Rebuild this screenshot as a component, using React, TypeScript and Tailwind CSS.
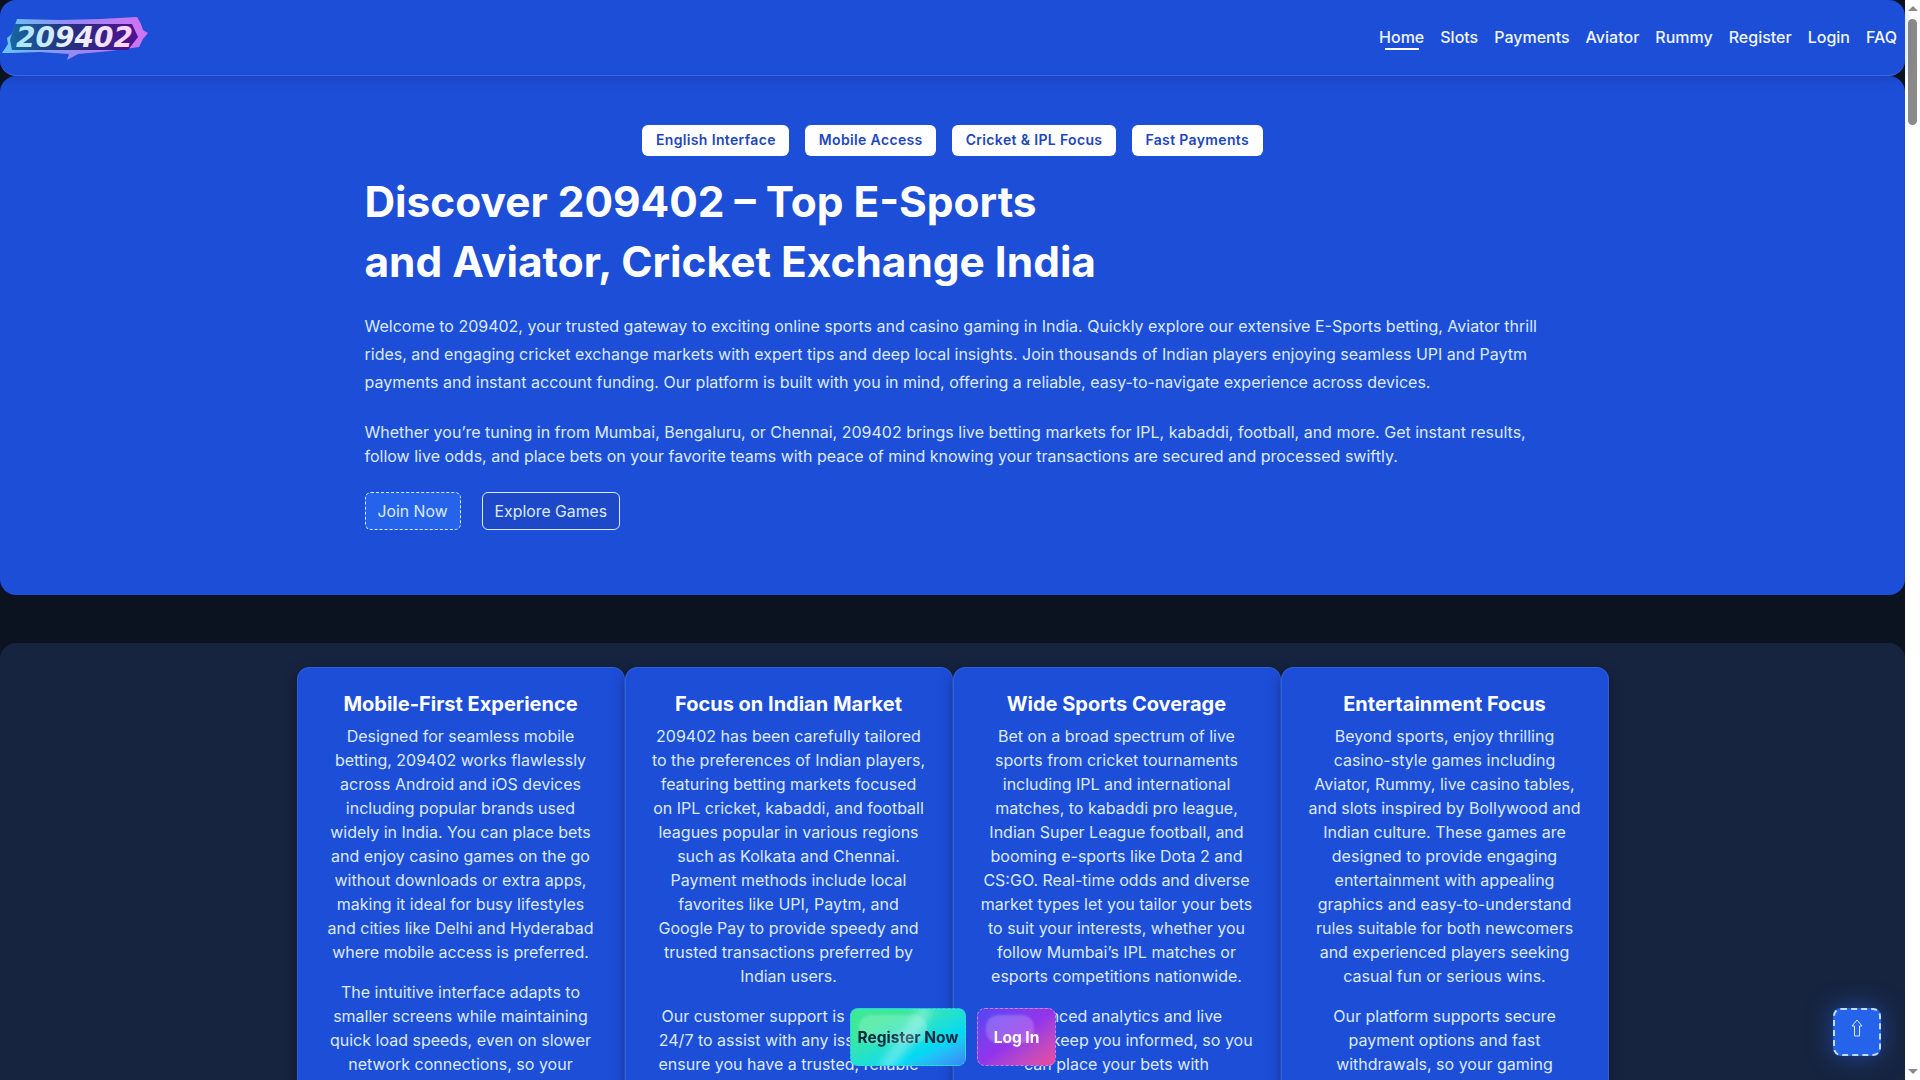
import React from 'react';

const navLinks = ['Home', 'Slots', 'Payments', 'Aviator', 'Rummy', 'Register', 'Login', 'FAQ'];
const tags = ['English Interface', 'Mobile Access', 'Cricket & IPL Focus', 'Fast Payments'];

const cards = [
    {
        title: 'Mobile-First Experience',
        body: [
            'Designed for seamless mobile betting, 209402 works flawlessly across Android and iOS devices including popular brands used widely in India. You can place bets and enjoy casino games on the go without downloads or extra apps, making it ideal for busy lifestyles and cities like Delhi and Hyderabad where mobile access is preferred.',
            'The intuitive interface adapts to smaller screens while maintaining quick load speeds, even on slower network connections, so your games keep running smoothly wherever you are.',
        ],
    },
    {
        title: 'Focus on Indian Market',
        body: [
            '209402 has been carefully tailored to the preferences of Indian players, featuring betting markets focused on IPL cricket, kabaddi, and football leagues popular in various regions such as Kolkata and Chennai. Payment methods include local favorites like UPI, Paytm, and Google Pay to provide speedy and trusted transactions preferred by Indian users.',
            'Our customer support is available 24/7 to assist with any issues, and ensure you have a trusted, reliable experience every time you play with us.',
        ],
    },
    {
        title: 'Wide Sports Coverage',
        body: [
            'Bet on a broad spectrum of live sports from cricket tournaments including IPL and international matches, to kabaddi pro league, Indian Super League football, and booming e-sports like Dota 2 and CS:GO. Real-time odds and diverse market types let you tailor your bets to suit your interests, whether you follow Mumbai’s IPL matches or esports competitions nationwide.',
            'Advanced analytics and live statistics keep you informed, so you can place your bets with comprehensive insight at every stage of the match.',
        ],
    },
    {
        title: 'Entertainment Focus',
        body: [
            'Beyond sports, enjoy thrilling casino-style games including Aviator, Rummy, live casino tables, and slots inspired by Bollywood and Indian culture. These games are designed to provide engaging entertainment with appealing graphics and easy-to-understand rules suitable for both newcomers and experienced players seeking casual fun or serious wins.',
            'Our platform supports secure payment options and fast withdrawals, so your gaming sessions stay simple and stress free from start to finish.',
        ],
    },
];

const Logo = () => (
    <svg width="150" height="48" viewBox="0 0 150 48" className="block">
        <defs>
            <linearGradient id="logoEdge" x1="0" x2="1" y1="0" y2="0">
                <stop offset="0" stopColor="#62c8f6" />
                <stop offset="0.5" stopColor="#9a86f2" />
                <stop offset="1" stopColor="#d272f2" />
            </linearGradient>
            <linearGradient id="logoFill" x1="0" x2="1" y1="0" y2="0">
                <stop offset="0" stopColor="#17669f" />
                <stop offset="0.45" stopColor="#23307e" />
                <stop offset="1" stopColor="#4f1092" />
            </linearGradient>
            <linearGradient id="logoText" x1="0" x2="1" y1="0" y2="0">
                <stop offset="0" stopColor="#a5e4fc" />
                <stop offset="0.5" stopColor="#eef1ff" />
                <stop offset="1" stopColor="#fbd0f8" />
            </linearGradient>
            <filter id="logoBlur">
                <feGaussianBlur stdDeviation="0.6" />
            </filter>
        </defs>
        <path
            d="M2 39 L8 30 L7 24 L12 20 L17 5 L60 6 L100 5 L137 3 L141 10 L143 16 L148 19 L143 25 L139 33 L110 37 L78 40 L67 46 L69 40 L40 38 L10 39 Z"
            fill="url(#logoEdge)"
            filter="url(#logoBlur)"
        />
        <path d="M15 10 L132 10 L138 23 L128 36 L12 36 L10 26 Z" fill="url(#logoFill)" />
        <text
            x="16"
            y="33"
            fontFamily="'DejaVu Sans', sans-serif"
            fontSize="28"
            fontWeight="700"
            fontStyle="italic"
            fill="url(#logoText)"
        >
            209402
        </text>
    </svg>
);

const ScrollBar = () => (
    <aside className="flex w-[15px] shrink-0 flex-col items-center bg-white">
        <span className="mt-[6px] h-0 w-0 border-x-[5px] border-b-[5px] border-x-transparent border-b-[#8a8a8a]" />
        <span className="mt-[8px] h-[106px] w-[9px] rounded-full bg-[#8a8a8a]" />
        <span className="mb-[6px] mt-auto h-0 w-0 border-x-[5px] border-t-[5px] border-x-transparent border-t-[#8a8a8a]" />
    </aside>
);

export default function App() {
    return (
        <div className="flex h-screen overflow-hidden bg-[#0b1320] font-['Inter',sans-serif] text-white">
            <main className="min-w-0 flex-1">
                <header className="relative z-20 flex h-[76px] items-center justify-between rounded-2xl border-b border-[#3b68d9] bg-[#1d4ed8] pr-2 shadow-[0_4px_12px_rgba(15,30,90,0.18)]">
                    <Logo />
                    <nav className="flex -translate-y-[1px] items-center gap-4 text-base font-medium text-[#eff6ff]">
                        {navLinks.map((link, i) => (
                            <a key={link} className="relative">
                                {link}
                                {i === 0 && (
                                    <span className="absolute bottom-[-1px] left-[6px] right-[5px] h-[2px] bg-white" />
                                )}
                            </a>
                        ))}
                    </nav>
                </header>

                <section className="rounded-2xl bg-[#1d4ed8] pb-[65px] pt-[49px]">
                    <div className="flex justify-center gap-4">
                        {tags.map((tag) => (
                            <span
                                key={tag}
                                className="flex h-[31px] items-center rounded-md bg-white px-[13.5px] pb-[1px] text-sm font-semibold tracking-[0.35px] text-[#1e46c0]"
                            >
                                {tag}
                            </span>
                        ))}
                    </div>

                    <div className="mx-auto mt-4 w-[1176px]">
                        <h1 className="text-[42.4px] font-bold leading-[60px]">
                            Discover 209402 – Top E-Sports
                            <br />
                            and Aviator, Cricket Exchange India
                        </h1>
                        <p className="mt-5 text-base leading-7 text-[#dbeafe]">
                            Welcome to 209402, your trusted gateway to exciting online sports and casino gaming in India. Quickly explore our extensive E-Sports betting, Aviator thrill rides, and engaging cricket exchange markets with expert tips and deep local insights. Join thousands of Indian players enjoying seamless UPI and Paytm payments and instant account funding. Our platform is built with you in mind, offering a reliable, easy-to-navigate experience across devices.
                        </p>
                        <p className="mt-6 text-base leading-6 text-[#dbeafe]">
                            Whether you’re tuning in from Mumbai, Bengaluru, or Chennai, 209402 brings live betting markets for IPL, kabaddi, football, and more. Get instant results, follow live odds, and place bets on your favorite teams with peace of mind knowing your transactions are secured and processed swiftly.
                        </p>
                        <div className="mt-6 flex gap-[21px]">
                            <button className="h-[38px] rounded-md border border-dashed border-[#dbeafe] bg-[#2563eb] px-3 pt-[1px] text-[15.8px] text-[#dbeafe]">
                                Join Now
                            </button>
                            <button className="h-[38px] rounded-md border border-[#dbeafe] bg-[#1e40af]/40 px-3 pt-[1px] text-[15.8px] text-[#dbeafe]">
                                Explore Games
                            </button>
                        </div>
                    </div>
                </section>

                <section className="mt-12 rounded-2xl bg-[#17243f] pb-10 pt-6">
                    <div className="mx-auto grid w-[1312px] grid-cols-4">
                        {cards.map((card) => (
                            <article
                                key={card.title}
                                className="rounded-xl border border-[#2f5fdc] bg-[#1d4ed8] px-6 py-[22px] text-center shadow-[0_4px_14px_rgba(0,0,0,0.35)]"
                            >
                                <h2 className="text-xl font-bold leading-7">{card.title}</h2>
                                <div className="mt-[6px] flex flex-col gap-4 text-base leading-6 text-[#dbeafe]">
                                    {card.body.map((text) => (
                                        <p key={text.slice(0, 20)}>{text}</p>
                                    ))}
                                </div>
                            </article>
                        ))}
                    </div>
                </section>
            </main>
            <ScrollBar />

            <div className="fixed bottom-[14px] left-[850px] z-30 flex items-start gap-[11px] text-[15.5px] font-bold">
                <button className="relative h-[58px] w-[116px] overflow-hidden rounded-lg border border-dashed border-[#22d3ee] bg-gradient-to-br from-[#3ee89a] from-25% via-[#00d9f5] via-70% to-[#3b82f6] pt-[2px] text-[#06283d]">
                    <span className="absolute left-[8px] top-[6px] h-[28px] w-[68px] rounded-xl bg-white/20 blur-[1px]" />
                    <span className="relative">Register Now</span>
                    <span className="absolute left-[48px] top-[-8px] h-[76px] w-[14px] rotate-[35deg] bg-white/30 blur-[4px]" />
                </button>
                <button className="relative h-[58px] w-[79px] overflow-hidden rounded-lg border border-dashed border-[#c084fc] bg-gradient-to-br from-[#4f46f5] via-[#9333ea] to-[#ec4899] pt-[2px] text-white">
                    <span className="absolute left-[8px] top-[6px] h-[28px] w-[48px] rounded-xl bg-white/20 blur-[1px]" />
                    <span className="relative">Log In</span>
                </button>
            </div>

            <button className="fixed bottom-[24px] left-[1833px] z-30 flex h-12 w-12 items-center justify-center rounded-lg border-2 border-dashed border-[#bfdbfe] bg-[#2563eb] pb-2 shadow-[0_0_24px_rgba(37,99,235,0.55)]">
                <svg width="12" height="18" viewBox="0 0 12 18" fill="none" stroke="#dbeafe" strokeWidth="1">
                    <path d="M6 1 L11 7 H8.5 V17 H3.5 V7 H1 Z" />
                </svg>
            </button>
        </div>
    );
}
